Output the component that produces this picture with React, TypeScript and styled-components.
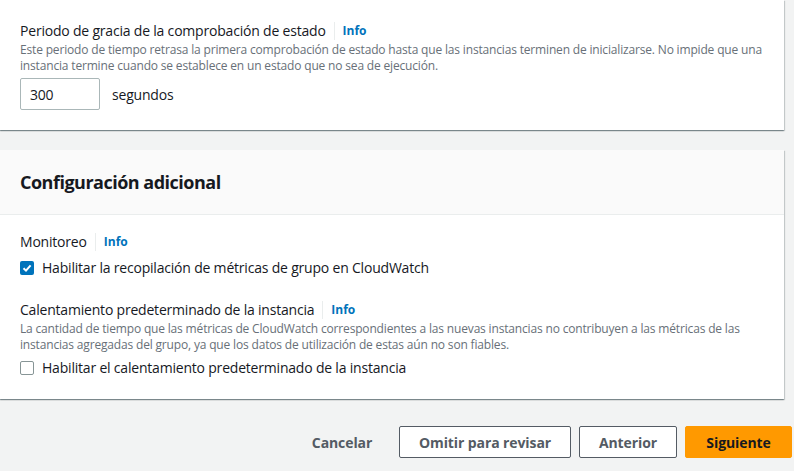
import React from "react";
import styled, { createGlobalStyle } from "styled-components";

const Global = createGlobalStyle`
  html, body { margin: 0; padding: 0; background: #f2f3f3; }
  body { font-family: "Open Sans", "Liberation Sans", Arial, sans-serif; color: #16191f; }
  * { box-sizing: border-box; }
`;

const Page = styled.div`
  width: 794px;
  height: 471px;
  overflow: hidden;
  display: flex;
  flex-direction: column;
  gap: 20px;
  padding-right: 10px;
`;

const Card = styled.section`
  background: #fff;
  box-shadow: 0 1px 1px 0 rgba(0, 28, 36, 0.3), 1px 1px 1px 0 rgba(0, 28, 36, 0.15),
    -1px 1px 1px 0 rgba(0, 28, 36, 0.15);
`;

const CardHeader = styled.header`
  background: #fafafa;
  border-bottom: 1px solid #eaeded;
  padding: 20px 20px;
  h2 {
    margin: 0;
    font-size: 18px;
    line-height: 24px;
    font-weight: 700;
    letter-spacing: -0.5px;
    color: #16191f;
  }
`;

const CardBody = styled.div<{ $top: number; $bottom: number }>`
  padding: ${(p) => p.$top}px 20px ${(p) => p.$bottom}px;
  display: flex;
  flex-direction: column;
`;

const Field = styled.div<{ $gap?: number }>`
  display: flex;
  flex-direction: column;
  margin-top: ${(p) => p.$gap ?? 0}px;
`;

const LabelRow = styled.div`
  display: flex;
  align-items: center;
  font-size: 14px;
  line-height: 22px;
  letter-spacing: -0.2px;
  color: #16191f;
`;

const InfoLink = styled.span`
  margin-left: 8px;
  padding-left: 8px;
  border-left: 1px solid #eaeded;
  color: #0073bb;
  font-weight: 700;
  font-size: 12px;
  line-height: 18px;
  letter-spacing: 0;
`;

const Description = styled.p`
  margin: 0;
  font-size: 12px;
  line-height: 16px;
  letter-spacing: -0.17px;
  color: #687078;
`;

const InputRow = styled.div`
  display: flex;
  align-items: center;
  gap: 12px;
  margin-top: 4px;
  font-size: 14px;
  letter-spacing: -0.2px;
`;

const NumberInput = styled.div`
  width: 80px;
  height: 32px;
  border: 1px solid #aab7b8;
  border-radius: 2px;
  padding: 0 9px;
  display: flex;
  align-items: center;
  font-size: 14px;
  color: #16191f;
`;

const CheckRow = styled.label<{ $top: number }>`
  display: flex;
  align-items: center;
  gap: 8px;
  margin-top: ${(p) => p.$top}px;
  font-size: 14px;
  line-height: 22px;
  letter-spacing: -0.2px;
  color: #16191f;
`;

const Box = styled.span<{ $checked?: boolean }>`
  width: 14px;
  height: 14px;
  border-radius: 2px;
  flex: none;
  display: flex;
  align-items: center;
  justify-content: center;
  background: ${(p) => (p.$checked ? "#0073bb" : "#fff")};
  border: ${(p) => (p.$checked ? "none" : "1px solid #879596")};
`;

const Actions = styled.div`
  display: flex;
  justify-content: flex-end;
  align-items: center;
  gap: 8px;
  margin-top: 7px;
  margin-right: -8px;
`;

const Button = styled.button<{ $variant: "link" | "normal" | "primary"; $w: number }>`
  width: ${(p) => p.$w}px;
  height: 32px;
  padding: 0;
  border-radius: 2px;
  font-family: inherit;
  font-size: 14px;
  font-weight: 700;
  letter-spacing: -0.1px;
  text-align: center;
  cursor: pointer;
  color: ${(p) => (p.$variant === "primary" ? "#16191f" : "#545b64")};
  background: ${(p) => (p.$variant === "primary" ? "#ff9900" : p.$variant === "normal" ? "#fff" : "transparent")};
  border: 1px solid ${(p) => (p.$variant === "primary" ? "#ff9900" : p.$variant === "normal" ? "#545b64" : "transparent")};
`;

const Check = () => (
  <svg width="10" height="10" viewBox="0 0 10 10">
    <path d="M1.5 5.2 L4 7.6 L8.6 2.4" fill="none" stroke="#fff" strokeWidth="2" />
  </svg>
);

export default function App() {
  return (
    <>
      <Global />
      <Page>
        <Card>
          <CardBody $top={20} $bottom={20}>
            <Field>
              <LabelRow>
                Periodo de gracia de la comprobación de estado
                <InfoLink>Info</InfoLink>
              </LabelRow>
              <Description>
                Este periodo de tiempo retrasa la primera comprobación de estado hasta que las instancias terminen de
                inicializarse. No impide que una instancia termine cuando se establece en un estado que no sea de
                ejecución.
              </Description>
              <InputRow>
                <NumberInput>300</NumberInput>
                segundos
              </InputRow>
            </Field>
          </CardBody>
        </Card>
        <Card>
          <CardHeader>
            <h2>Configuración adicional</h2>
          </CardHeader>
          <CardBody $top={16} $bottom={20}>
            <Field>
              <LabelRow>
                Monitoreo
                <InfoLink>Info</InfoLink>
              </LabelRow>
              <CheckRow $top={4}>
                <Box $checked>
                  <Check />
                </Box>
                Habilitar la recopilación de métricas de grupo en CloudWatch
              </CheckRow>
            </Field>
            <Field $gap={20}>
              <LabelRow>
                Calentamiento predeterminado de la instancia
                <InfoLink>Info</InfoLink>
              </LabelRow>
              <Description>
                La cantidad de tiempo que las métricas de CloudWatch correspondientes a las nuevas instancias no
                contribuyen a las métricas de las instancias agregadas del grupo, ya que los datos de utilización de
                estas aún no son fiables.
              </Description>
              <CheckRow $top={4}>
                <Box />
                Habilitar el calentamiento predeterminado de la instancia
              </CheckRow>
            </Field>
          </CardBody>
        </Card>
        <Actions>
          <Button $variant="link" $w={98}>Cancelar</Button>
          <Button $variant="normal" $w={172}>Omitir para revisar</Button>
          <Button $variant="normal" $w={98}>Anterior</Button>
          <Button $variant="primary" $w={107}>Siguiente</Button>
        </Actions>
      </Page>
    </>
  );
}
